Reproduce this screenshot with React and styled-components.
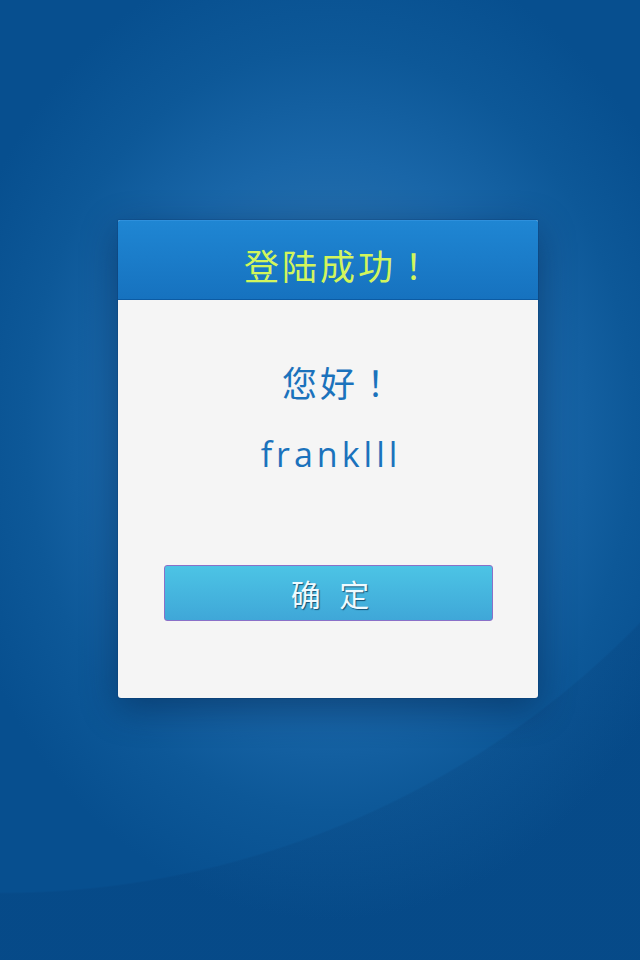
import React from "react";
import styled, { createGlobalStyle } from "styled-components";

const GlobalStyle = createGlobalStyle`
  html, body {
    margin: 0;
    padding: 0;
    background: #074f8f;
  }
  body {
    font-family: "Noto Sans CJK SC", "Noto Sans", sans-serif;
  }
`;

const Page = styled.div`
  width: 640px;
  height: 960px;
  box-sizing: border-box;
  padding: 220px 0 0 16px;
  display: flex;
  justify-content: center;
  align-items: flex-start;
  background:
    radial-gradient(circle 893px at 0 0, transparent 892px, rgba(0, 25, 70, 0.09) 894px),
    radial-gradient(ellipse 390px 490px at 330px 430px, #3479b1 0%, #2a72ae 30%, #1966a8 55%, #0d5898 78%, #074f8f 100%);
`;

const Card = styled.div`
  width: 420px;
  height: 478px;
  display: flex;
  flex-direction: column;
  background: #f5f5f5;
  border-radius: 2px 2px 3px 3px;
  box-shadow: 0 10px 36px rgba(0, 25, 60, 0.45), 0 0 0 1px rgba(10, 60, 120, 0.25);
  overflow: hidden;
`;

const Header = styled.div`
  height: 80px;
  box-sizing: border-box;
  border-top: 1px solid #2e90dc;
  border-bottom: 1px solid #0c5ba3;
  background: linear-gradient(#1f86d3, #1672bf);
  display: flex;
  align-items: center;
  justify-content: center;
  padding: 8px 0 0 22px;
`;

const Title = styled.h1`
  margin: 0;
  font-size: 35px;
  font-weight: 400;
  letter-spacing: 3px;
  color: #d2f55c;
  line-height: 1;
`;

const Bang = styled.span`
  font-family: "Noto Sans CJK TC", "Noto Sans CJK SC", sans-serif;
`;

const Body = styled.div`
  flex: 1;
  display: flex;
  flex-direction: column;
  align-items: center;
  padding-top: 64px;
`;

const Greeting = styled.div`
  font-size: 35px;
  letter-spacing: 3px;
  line-height: 1;
  color: #1b72bc;
  padding-left: 22px;
`;

const UserName = styled.div`
  margin-top: 38px;
  font-family: "Open Sans", "Noto Sans", sans-serif;
  font-size: 34px;
  letter-spacing: 4px;
  line-height: 1;
  color: #1b72bc;
  padding-left: 6px;
`;

const Confirm = styled.button`
  margin-top: 94px;
  width: 329px;
  height: 56px;
  border: 1px solid #8a70c8;
  border-radius: 3px;
  background: linear-gradient(#4cc4e5, #3fa7d8);
  color: #eefaff;
  font-family: "Noto Sans CJK SC", sans-serif;
  font-size: 30px;
  letter-spacing: 6px;
  padding: 0 0 0 10px;
  text-shadow: 1px 1px 1px rgba(0, 40, 70, 0.7);
  cursor: pointer;
`;

export default function App() {
  return (
    <>
      <GlobalStyle />
      <Page>
        <Card>
          <Header>
            <Title>
              登陆成功<Bang>！</Bang>
            </Title>
          </Header>
          <Body>
            <Greeting>
              您好<Bang>！</Bang>
            </Greeting>
            <UserName>franklll</UserName>
            <Confirm>确 定</Confirm>
          </Body>
        </Card>
      </Page>
    </>
  );
}
